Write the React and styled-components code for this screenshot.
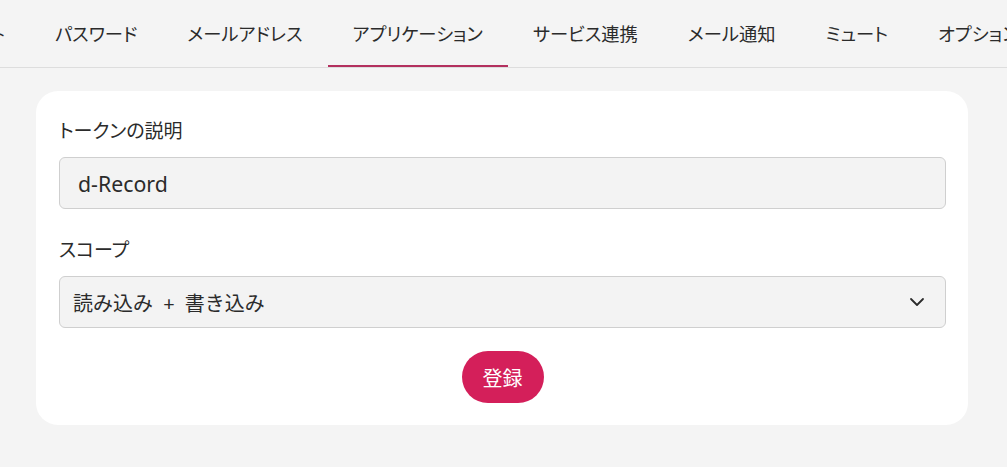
import React from "react";
import styled, { createGlobalStyle } from "styled-components";

const Global = createGlobalStyle`
  html, body { margin: 0; padding: 0; }
  body {
    background: #f4f4f4;
    font-family: "Noto Sans", "Noto Sans CJK JP", sans-serif;
    color: #2b2b2b;
    font-feature-settings: "palt";
  }
  * { box-sizing: border-box; }
`;

const TabBar = styled.nav`
  display: flex;
  height: 68px;
  border-bottom: 1px solid #dddddd;
  overflow: hidden;
  white-space: nowrap;
`;

const Clip = styled.div`
  display: flex;
  justify-content: flex-end;
  width: 30px;
  flex: none;
  overflow: hidden;
`;

const Tab = styled.div`
  flex: none;
  display: flex;
  align-items: center;
  height: 67px;
  padding: 1px 25px 0;
  font-size: 18.3px;
  color: #2b2b2b;
  border-bottom: 2px solid ${(p) => (p.$active ? "#b3305e" : "transparent")};
`;

const Card = styled.section`
  margin: 23px 39px 0 36px;
  background: #ffffff;
  border-radius: 22px;
  padding: 26px 22px 22px 23px;
  display: flex;
  flex-direction: column;
`;

const Label = styled.label`
  font-size: 19px;
  line-height: 28px;
  margin-bottom: 12px;
  margin-top: ${(p) => (p.$spaced ? "27px" : "0")};
`;

const Field = styled.div`
  height: 52px;
  background: #f3f3f3;
  border: 1px solid #cfcfcf;
  border-radius: 6px;
  display: flex;
  align-items: center;
  justify-content: space-between;
  padding: ${(p) => (p.$select ? "0 20px 0 13px" : "0 18px")};
  font-size: ${(p) => (p.$select ? "20px" : "21.3px")};
  font-feature-settings: ${(p) => (p.$select ? "normal" : "palt")};
  word-spacing: ${(p) => (p.$select ? "5px" : "normal")};
`;

const Chevron = styled.svg`
  width: 16px;
  height: 16px;
  flex: none;
`;

const Actions = styled.div`
  display: flex;
  justify-content: center;
  margin-top: 23px;
`;

const Button = styled.button`
  height: 52px;
  width: 82px;
  border: none;
  border-radius: 26px;
  background: #d41f5a;
  color: #ffffff;
  font-family: inherit;
  font-size: 20px;
  padding: 0;
  cursor: pointer;
`;

const tabs = ["パスワード", "メールアドレス", "アプリケーション", "サービス連携", "メール通知", "ミュート", "オプション"];

export default function App() {
  return (
    <>
      <Global />
      <TabBar>
        <Clip>
          <Tab>アカウント</Tab>
        </Clip>
        {tabs.map((t) => (
          <Tab key={t} $active={t === "アプリケーション"}>{t}</Tab>
        ))}
      </TabBar>
      <Card>
        <Label>トークンの説明</Label>
        <Field>d-Record</Field>
        <Label $spaced>スコープ</Label>
        <Field $select>
          <span>読み込み + 書き込み</span>
          <Chevron viewBox="0 0 16 16" fill="none" stroke="#2b2b2b" strokeWidth="1.8" strokeLinecap="round" strokeLinejoin="round">
            <path d="M2 5l6 6 6-6" />
          </Chevron>
        </Field>
        <Actions>
          <Button>登録</Button>
        </Actions>
      </Card>
    </>
  );
}
